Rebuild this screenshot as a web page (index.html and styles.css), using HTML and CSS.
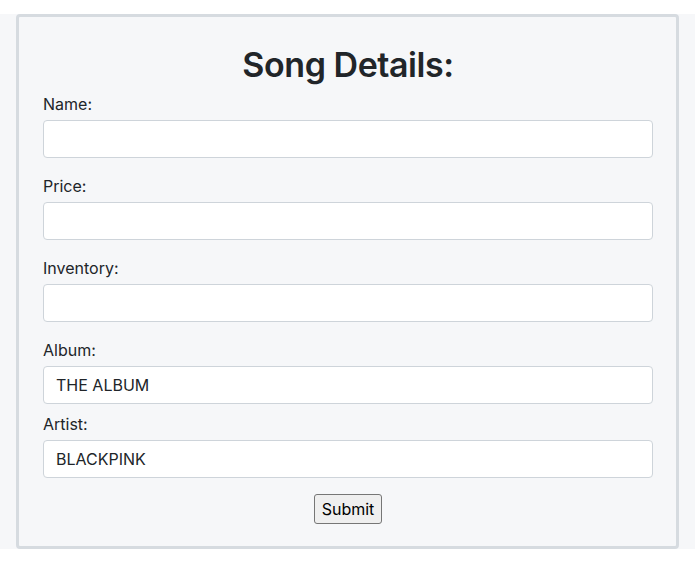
FILE: index.html
```html
<!DOCTYPE html>
<html lang="en">
<head>
<meta charset="utf-8">
<title>Song Details</title>
<link rel="stylesheet" href="styles.css">
</head>
<body>
<div class="page">
  <form class="card">
    <h1 class="title">Song Details:</h1>
    <div class="group">
      <label class="label" for="name">Name:</label>
      <input class="field" id="name" type="text">
    </div>
    <div class="group">
      <label class="label" for="price">Price:</label>
      <input class="field" id="price" type="text">
    </div>
    <div class="group">
      <label class="label" for="inventory">Inventory:</label>
      <input class="field" id="inventory" type="text">
    </div>
    <div class="group group-tight">
      <label class="label" for="album">Album:</label>
      <input class="field" id="album" type="text" value="THE ALBUM">
    </div>
    <div class="group group-last">
      <label class="label" for="artist">Artist:</label>
      <input class="field" id="artist" type="text" value="BLACKPINK">
    </div>
    <div class="actions">
      <button class="submit" type="button">Submit</button>
    </div>
  </form>
</div>
</body>
</html>
```
FILE: styles.css
```css
html, body {
  margin: 0;
  padding: 0;
  background: #ffffff;
}

body {
  font-family: Inter, "Liberation Sans", sans-serif;
  color: #212529;
}

.page {
  margin-top: 14px;
  background: #f6f7f9;
  padding: 0 16px;
}

.card {
  display: flex;
  flex-direction: column;
  border: 3px solid #d6dbe0;
  border-radius: 4px;
  background: #f6f7f9;
  padding: 28px 23px 22px 24px;
  margin: 0;
}

.title {
  margin: 0 0 3px 0;
  font-size: 34px;
  line-height: 40px;
  font-weight: 600;
  text-align: center;
  color: #212529;
  letter-spacing: -0.45px;
}

.group {
  display: flex;
  flex-direction: column;
  margin-bottom: 12px;
}

.group-tight {
  margin-bottom: 4px;
}

.group-last {
  margin-bottom: 16px;
}

.label {
  display: block;
  font-size: 16px;
  line-height: 24px;
  padding-top: 4px;
  margin-bottom: 4px;
  color: #212529;
}

.field {
  box-sizing: border-box;
  width: 610px;
  height: 38px;
  border: 1px solid #ced4da;
  border-radius: 4px;
  background: #ffffff;
  padding: 0 12px;
  font-family: Inter, "Liberation Sans", sans-serif;
  font-size: 16px;
  color: #212529;
  outline: none;
}

.actions {
  display: flex;
  justify-content: center;
}

.submit {
  font-family: Inter, "Liberation Sans", sans-serif;
  font-size: 16px;
  line-height: 20px;
  height: 30px;
  padding: 4px 7px;
  border: 1px solid #767676;
  border-radius: 3px;
  background: #efefef;
  color: #000000;
}
```
